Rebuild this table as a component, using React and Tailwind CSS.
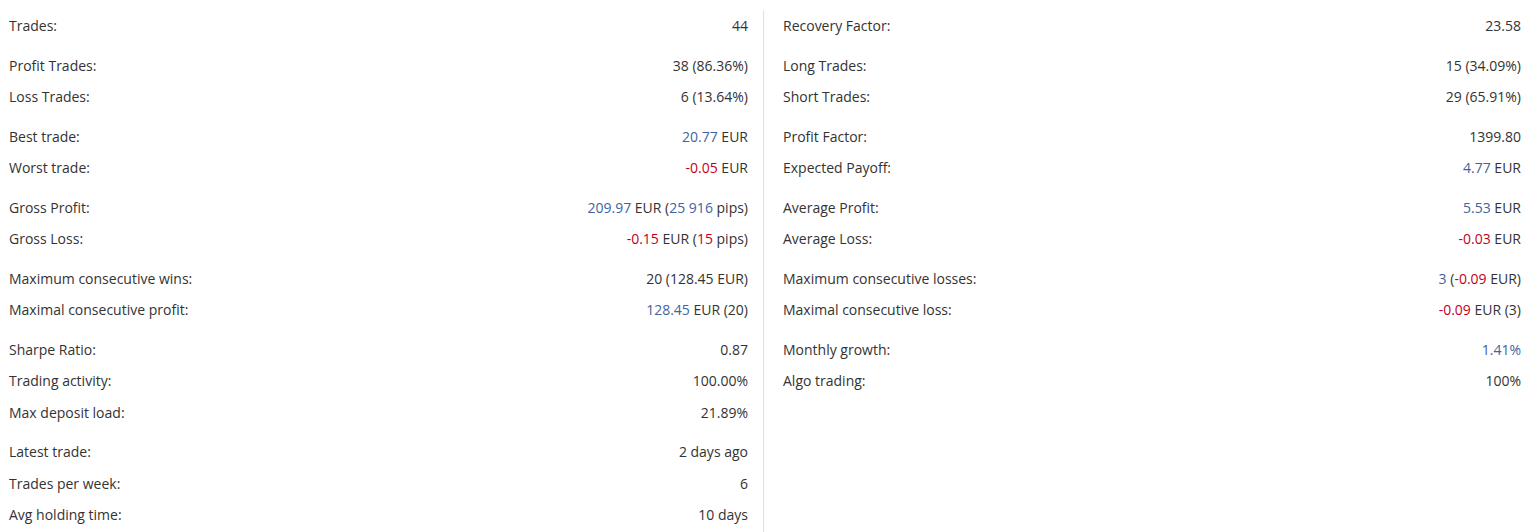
import React from "react";

const B = ({ children }) => <span className="text-[#42639e]">{children}</span>;
const R = ({ children }) => <span className="text-[#c3001b]">{children}</span>;

const left = [
  [["Trades:", "44"]],
  [
    ["Profit Trades:", "38 (86.36%)"],
    ["Loss Trades:", "6 (13.64%)"],
  ],
  [
    ["Best trade:", <><B>20.77</B> EUR</>],
    ["Worst trade:", <><R>-0.05</R> EUR</>],
  ],
  [
    ["Gross Profit:", <><B>209.97</B> EUR (<B>25 916</B> pips)</>],
    ["Gross Loss:", <><R>-0.15</R> EUR (<R>15</R> pips)</>],
  ],
  [
    ["Maximum consecutive wins:", "20 (128.45 EUR)"],
    ["Maximal consecutive profit:", <><B>128.45</B> EUR (20)</>],
  ],
  [
    ["Sharpe Ratio:", "0.87"],
    ["Trading activity:", "100.00%"],
    ["Max deposit load:", "21.89%"],
  ],
  [
    ["Latest trade:", "2 days ago"],
    ["Trades per week:", "6"],
    ["Avg holding time:", "10 days"],
  ],
];

const right = [
  [["Recovery Factor:", "23.58"]],
  [
    ["Long Trades:", "15 (34.09%)"],
    ["Short Trades:", "29 (65.91%)"],
  ],
  [
    ["Profit Factor:", "1399.80"],
    ["Expected Payoff:", <><B>4.77</B> EUR</>],
  ],
  [
    ["Average Profit:", <><B>5.53</B> EUR</>],
    ["Average Loss:", <><R>-0.03</R> EUR</>],
  ],
  [
    ["Maximum consecutive losses:", <><B>3</B> (<R>-0.09</R> EUR)</>],
    ["Maximal consecutive loss:", <><R>-0.09</R> EUR (3)</>],
  ],
  [
    ["Monthly growth:", <B>1.41%</B>],
    ["Algo trading:", "100%"],
  ],
];

const Column = ({ groups }) => (
  <div className="flex flex-col gap-2">
    {groups.map((rows, i) => (
      <div key={i} className="flex flex-col">
        {rows.map(([label, value]) => (
          <div key={label} className="flex h-[31.5px] items-center justify-between">
            <span>{label}</span>
            <span>{value}</span>
          </div>
        ))}
      </div>
    ))}
  </div>
);

export default function App() {
  return (
    <div className="flex h-[532px] overflow-hidden bg-white pl-[9px] pr-[12px] pt-[10px] text-[14px] text-[#333] [font-family:'Open_Sans','Noto_Sans',sans-serif]">
      <div className="w-[739px]">
        <Column groups={left} />
      </div>
      <div className="ml-[15px] w-px self-stretch bg-[#e1e1e1]" />
      <div className="ml-[19px] flex-1">
        <Column groups={right} />
      </div>
    </div>
  );
}
